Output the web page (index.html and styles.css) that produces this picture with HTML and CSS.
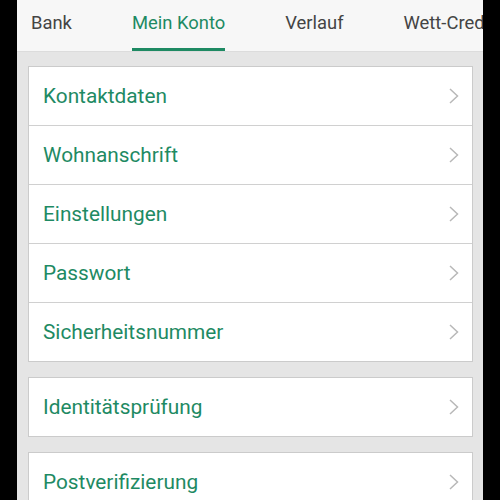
FILE: index.html
```html
<!DOCTYPE html>
<html>
	<head>
		<meta charset="UTF-8">
		<meta name="viewport" content="width=device-width, initial-scale=1.0">
		<title>Mein Konto</title>
		<link rel="stylesheet" href="styles.css">
	</head>
	<body>
		<div class="screen">
			<div class="tabs">
				<span class="tab">Bank</span>
				<span class="tab active">Mein Konto</span>
				<span class="tab">Verlauf</span>
				<span class="tab">Wett-Credits</span>
			</div>
			<div class="content">
				<div class="card">
					<div class="row"><span>Kontaktdaten</span><svg class="chev" viewBox="0 0 10 16"><path d="M1 1l7.5 7L1 15"/></svg></div>
					<div class="row"><span>Wohnanschrift</span><svg class="chev" viewBox="0 0 10 16"><path d="M1 1l7.5 7L1 15"/></svg></div>
					<div class="row"><span>Einstellungen</span><svg class="chev" viewBox="0 0 10 16"><path d="M1 1l7.5 7L1 15"/></svg></div>
					<div class="row"><span>Passwort</span><svg class="chev" viewBox="0 0 10 16"><path d="M1 1l7.5 7L1 15"/></svg></div>
					<div class="row"><span>Sicherheitsnummer</span><svg class="chev" viewBox="0 0 10 16"><path d="M1 1l7.5 7L1 15"/></svg></div>
				</div>
				<div class="card">
					<div class="row"><span>Identitätsprüfung</span><svg class="chev" viewBox="0 0 10 16"><path d="M1 1l7.5 7L1 15"/></svg></div>
				</div>
				<div class="card">
					<div class="row"><span>Postverifizierung</span><svg class="chev" viewBox="0 0 10 16"><path d="M1 1l7.5 7L1 15"/></svg></div>
				</div>
			</div>
		</div>
	</body>
</html>
```

FILE: styles.css
```css
* {
	box-sizing: border-box;
}

body {
	margin: 0;
	background-color: #000;
	font-family: Roboto, "Noto Sans", sans-serif;
	height: 500px;
	overflow: hidden;
}

.screen {
	width: 466px;
	height: 500px;
	margin-left: 17px;
	background-color: #e5e5e5;
	overflow: hidden;
}

.tabs {
	height: 52px;
	display: flex;
	gap: 60px;
	padding-left: 14px;
	background-color: #f7f7f7;
	border-bottom: 1px solid #dcdcdc;
	white-space: nowrap;
	overflow: hidden;
}

.tab {
	display: flex;
	align-items: center;
	height: 51px;
	font-size: 18.4px;
	color: #444;
	border-bottom: 3px solid transparent;
	padding-bottom: 4px;
}

.tab.active {
	color: #1e8a63;
	border-bottom-color: #1e8a63;
}

.content {
	padding: 14px 10px 0 11px;
	display: flex;
	flex-direction: column;
	gap: 15px;
}

.card {
	background-color: #fff;
	border: 1px solid #cbcbcb;
}

.row {
	height: 59px;
	display: flex;
	align-items: center;
	justify-content: space-between;
	padding: 0 13px 0 14px;
	font-size: 20.8px;
	color: #1e8a63;
	border-top: 1px solid #d0d0d0;
}

.row:first-child {
	border-top: none;
	height: 58px;
}

.chev {
	width: 10px;
	height: 16px;
	fill: none;
	stroke: #b8b8b8;
	stroke-width: 1.5;
}
```
